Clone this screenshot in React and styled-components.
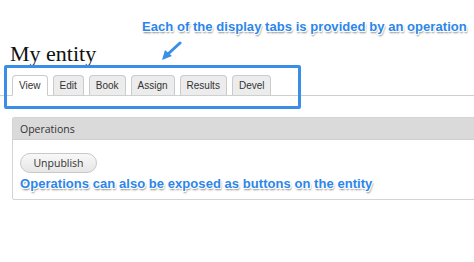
import React from "react";
import styled, { createGlobalStyle } from "styled-components";

const Global = createGlobalStyle`
  html, body { margin: 0; padding: 0; background: #fff; }
  body { width: 474px; height: 262px; overflow: hidden; }
`;

const Page = styled.div`
  position: relative;
  width: 474px;
  height: 262px;
  overflow: hidden;
  padding-top: 19px;
  box-sizing: border-box;
`;

const Callout = styled.div`
  font-family: "Liberation Sans", Arial, sans-serif;
  font-weight: bold;
  font-size: 13px;
  letter-spacing: 0.05px;
  line-height: 16px;
  color: #2c86ea;
  white-space: nowrap;
  padding-left: ${(p) => p.$indent}px;
  text-shadow: -1px -1px 0 #fff, 1px -1px 0 #fff, -1px 1px 0 #fff, 1px 1px 0 #fff,
    0 -1px 0 #fff, 0 1px 0 #fff, -1px 0 0 #fff, 1px 0 0 #fff,
    1px 2px 2px rgba(0, 0, 0, 0.55);
`;

const Title = styled.h1`
  margin: 7px 0 0 10px;
  font-family: "Liberation Serif", "Times New Roman", serif;
  font-weight: normal;
  font-size: 22px;
  line-height: 24px;
  color: #111;
`;

const Arrow = styled.svg`
  position: absolute;
  left: 160px;
  top: 41px;
`;

const TabsArea = styled.div`
  position: relative;
  margin-top: 9px;
  padding: 0 0 0 12px;
  border-bottom: 1px solid #cfcfcf;
  display: flex;
  gap: 5px;
  height: 20px;
`;

const Tab = styled.div`
  box-sizing: border-box;
  padding: 0 6px;
  display: flex;
  align-items: center;
  font-family: "Liberation Sans", Arial, sans-serif;
  font-size: 10px;
  color: #333;
  background: ${(p) => (p.$active ? "#fff" : "#ececec")};
  border: 1px solid #cbcbcb;
  border-bottom: ${(p) => (p.$active ? "1px solid #fff" : "none")};
  border-radius: 4px 4px 0 0;
  margin-bottom: ${(p) => (p.$active ? "-1px" : "0")};
  height: ${(p) => (p.$active ? "21px" : "20px")};
`;

const Highlight = styled.div`
  position: absolute;
  left: 4px;
  top: 65px;
  width: 297px;
  height: 44px;
  box-sizing: border-box;
  border: 3px solid #3a8ee8;
  border-radius: 2px;
  pointer-events: none;
`;

const Panel = styled.div`
  margin: 21px 0 0 12px;
  width: 480px;
  border: 1px solid #d4d4d4;
  border-radius: 2px;
  box-sizing: border-box;
`;

const PanelHead = styled.div`
  height: 21px;
  background: #dadada;
  border-bottom: 1px solid #cfcfcf;
  display: flex;
  align-items: center;
  padding-left: 7px;
  font-family: "Open Sans", "DejaVu Sans", sans-serif;
  font-size: 10.5px;
  color: #333;
`;

const PanelBody = styled.div`
  padding: 13px 0 7px 7px;
  display: flex;
  flex-direction: column;
  align-items: flex-start;
  gap: 3px;
`;

const Button = styled.button`
  height: 20px;
  width: 77px;
  border: 1px solid #c8c8c8;
  border-radius: 10px;
  background: linear-gradient(#f8f8f8, #e6e6e6);
  font-family: "Open Sans", "DejaVu Sans", sans-serif;
  font-size: 10.5px;
  color: #333;
  padding: 0;
  display: flex;
  align-items: center;
  justify-content: center;
`;

const tabs = ["View", "Edit", "Book", "Assign", "Results", "Devel"];

export default function App() {
  return (
    <>
      <Global />
      <Page>
        <Callout $indent={142}>Each of the display tabs is provided by an operation</Callout>
        <Title>My entity</Title>
        <Arrow width="24" height="22" viewBox="0 0 24 22">
          <line x1="20" y1="2" x2="8" y2="13" stroke="#3a8ee8" strokeWidth="3" strokeLinecap="round" />
          <polygon points="2,19 5,9 12,15" fill="#3a8ee8" />
        </Arrow>
        <TabsArea>
          {tabs.map((t, i) => (
            <Tab key={t} $active={i === 0}>{t}</Tab>
          ))}
        </TabsArea>
        <Highlight />
        <Panel>
          <PanelHead>Operations</PanelHead>
          <PanelBody>
            <Button>Unpublish</Button>
            <Callout $indent={0}>Operations can also be exposed as buttons on the entity</Callout>
          </PanelBody>
        </Panel>
      </Page>
    </>
  );
}
